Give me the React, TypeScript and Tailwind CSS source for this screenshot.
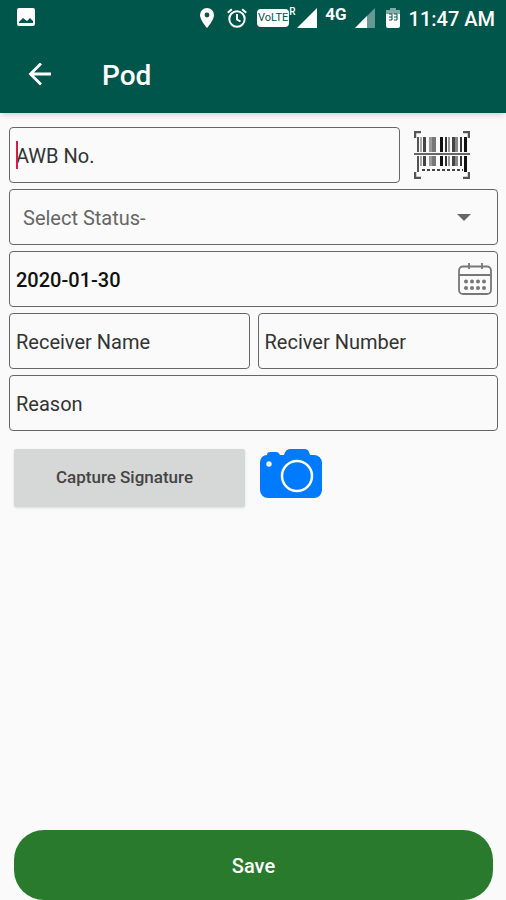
import { useState } from "react";
import type { InputHTMLAttributes } from "react";
import clsx from "clsx";

interface FieldProps extends InputHTMLAttributes<HTMLInputElement> {
  label: string;
}

const statuses = ["Delivered", "Undelivered", "Returned"];

const bars = [
  { x: 3, w: 2, color: "#555" },
  { x: 6, w: 2, color: "#aaa" },
  { x: 9, w: 3, color: "#444" },
  { x: 15, w: 3, color: "#999" },
  { x: 18, w: 4, color: "#777" },
  { x: 26, w: 3, color: "#111" },
  { x: 31, w: 2, color: "#333" },
  { x: 34, w: 2, color: "#999" },
  { x: 38, w: 3, color: "#444" },
  { x: 41, w: 3, color: "#888" },
  { x: 46, w: 2, color: "#333" },
  { x: 50, w: 3, color: "#111" },
];

function Field({ label, className, ...props }: FieldProps) {
  return (
    <input
      type="text"
      aria-label={label}
      placeholder={label}
      className={clsx(
        "h-14 w-full min-w-0 rounded border border-[#666] bg-transparent px-1.5 pt-0.5 text-xl text-[#111] outline-none placeholder:text-[#333]",
        className
      )}
      {...props}
    />
  );
}

function StatusBar() {
  return (
    <div className="flex h-9 items-center justify-between pr-[11px] pl-4 text-white">
      <svg className="h-5 w-5" viewBox="0 0 20 20" fill="currentColor">
        <path
          fillRule="evenodd"
          d="M3 0h14a2 2 0 0 1 2 2v14a2 2 0 0 1-2 2H3a2 2 0 0 1-2-2V2a2 2 0 0 1 2-2zm0 15h14v-2l-3-3-3 3-4-3-4 4z"
        />
      </svg>
      <div className="flex items-center">
        <svg className="h-5 w-4" viewBox="0 0 16 20">
          <path
            fill="currentColor"
            d="M8 0a7 7 0 0 0-7 7c0 5 7 13 7 13s7-8 7-13a7 7 0 0 0-7-7z"
          />
          <circle cx="8" cy="7" r="2.4" fill="#00564a" />
        </svg>
        <svg
          className="ml-3 h-5 w-5"
          viewBox="0 0 20 20"
          fill="none"
          stroke="currentColor"
          strokeWidth="2"
        >
          <circle cx="10" cy="11" r="7.7" />
          <path d="M10 6v5.500l3.500 2M.8 4.800l4-3.500M19.200 4.800l-4-3.500" />
        </svg>
        <span className="ml-2.5 flex h-[18px] w-8 items-center justify-center rounded-sm bg-white text-[11px] text-[#00564a]">
          VoLTE
        </span>
        <span className="h-[22px] w-2 text-[10px] leading-none font-medium">R</span>
        <svg className="h-5 w-5" viewBox="0 0 20 20" fill="currentColor">
          <path d="M20 0v20H0z" />
        </svg>
        <span className="ml-2 h-7 text-[17px] leading-5 font-bold">4G</span>
        <svg className="ml-2 h-5 w-5" viewBox="0 0 20 20" fill="currentColor">
          <path d="M20 0v20H0z" opacity=".4" />
          <path d="M12 8v12H0z" />
        </svg>
        <svg className="ml-2.5 h-5 w-4" viewBox="0 0 16 20" fill="currentColor">
          <path d="M5 0h6v2h4v4H1V2h4z" opacity=".5" />
          <path d="M1 6h14v12a2 2 0 0 1-2 2H3a2 2 0 0 1-2-2z" />
          <path
            d="M4 6h3v6H4M4 9h3M9 6h3v6H9M9 9h3"
            fill="none"
            stroke="#00564a"
            strokeWidth="1"
          />
        </svg>
        <span className="ml-2 pt-0.5 text-xl font-medium">11:47 AM</span>
      </div>
    </div>
  );
}

function BarcodeIcon() {
  return (
    <svg className="h-12 w-14" viewBox="0 0 56 48">
      <path
        d="M1 7V1h6M49 1h6v6M55 41v6h-6M7 47H1v-6"
        fill="none"
        stroke="#555"
        strokeWidth="2.500"
      />
      {bars.map((bar) => (
        <rect
          key={bar.x}
          x={bar.x}
          y="6"
          width={bar.w}
          height={bar.x === 3 || bar.x === 50 ? 35 : 29}
          fill={bar.color}
        />
      ))}
      <path d="M0 21h56v4H0z" fill="#fafafa" />
      <path d="M0 23h56" stroke="#666" strokeWidth="2" />
      <path d="M8 39h41" stroke="#444" strokeWidth="2" strokeDasharray="3 2" />
    </svg>
  );
}

function CalendarIcon() {
  return (
    <svg
      className="h-8 w-[34px]"
      viewBox="0 0 34 32"
      fill="none"
      stroke="#777"
      strokeWidth="1.800"
    >
      <rect x="1" y="3.500" width="32" height="27.500" rx="4" />
      <path d="M1 12h32M11 0v6M24 0v6" />
      <g fill="#777" stroke="none">
        {[8, 14, 20, 26].map((x) => (
          <g key={x}>
            <circle cx={x} cy="18.500" r="2" />
            <circle cx={x} cy="25" r="2" />
          </g>
        ))}
      </g>
    </svg>
  );
}

function CameraIcon() {
  return (
    <svg className="h-[50px] w-[62px]" viewBox="0 0 62 50">
      <path
        fill="#007bff"
        d="M8 49a8 8 0 0 1-8-8V13a7 7 0 0 1 7-7c0-2 1-3 3-3h6c2 0 3 1 4 3h4c1-4 3-6 6-6h14c4 0 5 2 6 6h4a8 8 0 0 1 8 8v27a8 8 0 0 1-8 8z"
      />
      <circle cx="9" cy="15" r="2.700" fill="#fff" />
      <circle cx="37" cy="27" r="15" fill="none" stroke="#fff" strokeWidth="2.500" />
    </svg>
  );
}

export default function App() {
  const [awb, setAwb] = useState("");
  const [date, setDate] = useState("2020-01-30");

  return (
    <div className="flex min-h-screen flex-col bg-[#fafafa] font-[Roboto,sans-serif]">
      <header className="bg-[#00564a] shadow-md">
        <StatusBar />
        <div className="flex h-[77px] items-center pl-7 text-white">
          <button type="button" aria-label="Back">
            <svg
              className="h-6 w-6"
              viewBox="0 0 24 24"
              fill="none"
              stroke="currentColor"
              strokeWidth="2.800"
            >
              <path d="M23 11H3M13 .5L2.500 11 13 21.500" />
            </svg>
          </button>
          <h1 className="ml-[50px] pt-0.5 text-[28px] font-medium">Pod</h1>
        </div>
      </header>

      <main className="flex flex-1 flex-col gap-1.5 px-2 pt-3.5 pl-[9px]">
        <div className="flex items-center">
          <div className="relative flex-1">
            <Field label="AWB No." value={awb} onChange={(e) => setAwb(e.target.value)} />
            <span className="absolute top-3.5 left-[7px] h-7 w-0.5 bg-[#d81b4a]" />
          </div>
          <button type="button" aria-label="Scan barcode" className="mr-7 ml-3.5">
            <BarcodeIcon />
          </button>
        </div>

        <div className="relative">
          <select
            aria-label="Status"
            defaultValue=""
            className="h-14 w-full appearance-none rounded border border-[#666] bg-transparent px-[13px] pt-0.5 text-xl text-[#666] outline-none"
          >
            <option value="">Select Status-</option>
            {statuses.map((status) => (
              <option key={status}>{status}</option>
            ))}
          </select>
          <svg
            className="pointer-events-none absolute top-6 right-[27px] h-2 w-3.5"
            viewBox="0 0 14 8"
          >
            <path d="M0 1h14L7 8z" fill="#666" />
          </svg>
        </div>

        <div className="relative">
          <Field
            label="Date"
            className="font-medium"
            value={date}
            onChange={(e) => setDate(e.target.value)}
          />
          <button type="button" aria-label="Pick date" className="absolute top-3 right-1.5">
            <CalendarIcon />
          </button>
        </div>

        <div className="flex gap-2">
          <Field label="Receiver Name" />
          <Field label="Reciver Number" />
        </div>

        <Field label="Reason" />

        <div className="mt-3 flex items-start gap-[15px] pl-[5px]">
          <button
            type="button"
            className="h-[58px] w-[231px] rounded-xs bg-[#d6d7d7] pr-2.5 text-[17px] font-medium text-[#444] shadow"
          >
            Capture Signature
          </button>
          <button type="button" aria-label="Take photo">
            <CameraIcon />
          </button>
        </div>
      </main>

      <footer className="pr-[13px] pl-3.5">
        <button
          type="button"
          className="h-[70px] w-full rounded-[30px] bg-[#2a7a2d] pt-0.5 text-xl font-medium text-white"
        >
          Save
        </button>
      </footer>
    </div>
  );
}
